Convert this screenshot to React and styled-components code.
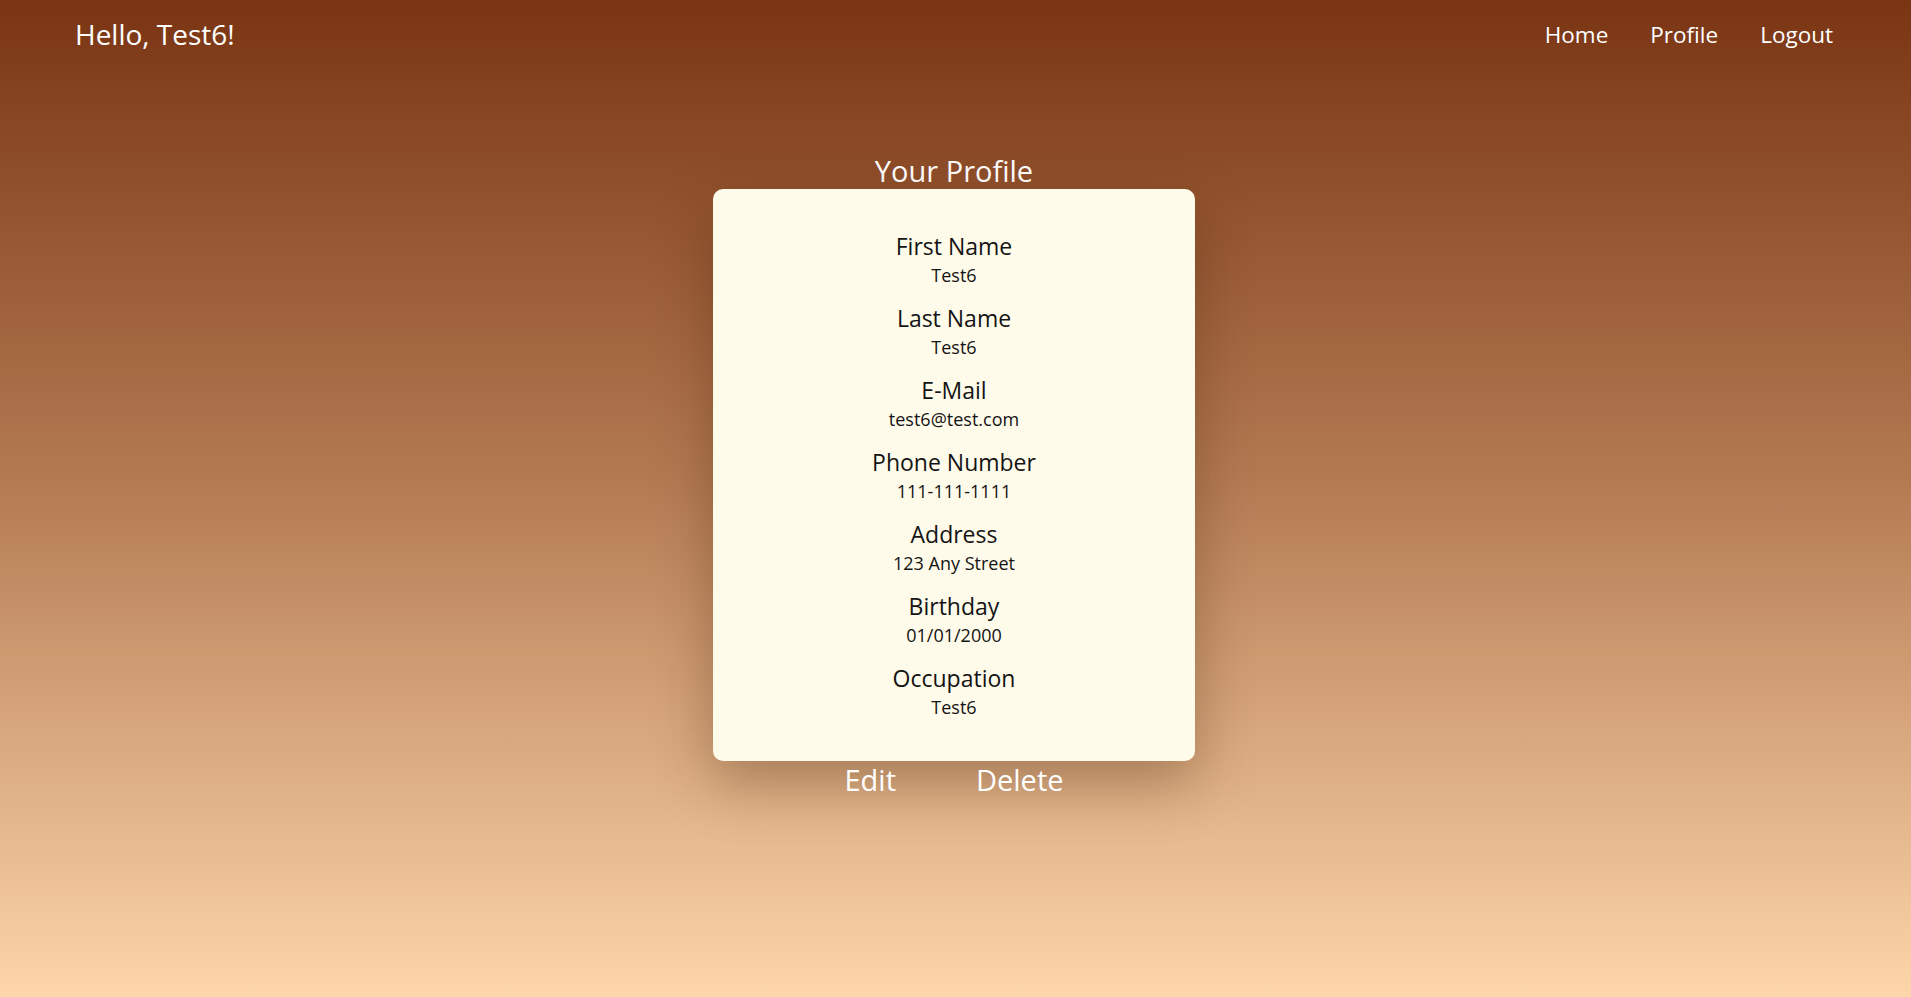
import React from "react";
import styled, { createGlobalStyle } from "styled-components";

const GlobalStyle = createGlobalStyle`
  html, body {
    margin: 0;
    padding: 0;
  }
  body {
    min-height: 100vh;
    font-family: "Open Sans", "Noto Sans", sans-serif;
    background: linear-gradient(to bottom, #7a3513 0%, #b37a52 48%, #fdd6aa 100%);
    background-attachment: fixed;
  }
`;

const PROFILE_FIELDS = [
  { label: "First Name", value: "Test6" },
  { label: "Last Name", value: "Test6" },
  { label: "E-Mail", value: "test6@test.com" },
  { label: "Phone Number", value: "111-111-1111" },
  { label: "Address", value: "123 Any Street" },
  { label: "Birthday", value: "01/01/2000" },
  { label: "Occupation", value: "Test6" },
];

const StyledPage = styled.div`
  min-height: 100vh;
  display: flex;
  flex-direction: column;
`;
const StyledHeader = styled.header`
  display: flex;
  justify-content: space-between;
  align-items: center;
  padding: 15px 78px 0 75px;
`;
const StyledGreeting = styled.div`
  font-size: 28px;
  color: #ffffff;
`;
const StyledNav = styled.nav`
  display: flex;
  gap: 42px;
`;
const StyledNavLink = styled.a`
  font-size: 22.5px;
  color: #ffffff;
  text-decoration: none;
  cursor: pointer;
`;
const StyledMain = styled.main`
  display: flex;
  flex-direction: column;
  align-items: center;
  margin-top: 100px;
  padding-right: 3px;
`;
const StyledTitle = styled.h2`
  margin: 0;
  font-size: 29px;
  line-height: 36px;
  font-weight: 400;
  color: #ffffff;
`;
const StyledCard = styled.div`
  width: 482px;
  box-sizing: border-box;
  padding: 41px 0 42px;
  background: #fffbea;
  border-radius: 10px;
  box-shadow: 0 22px 55px rgba(70, 35, 10, 0.35);
  display: flex;
  flex-direction: column;
  align-items: center;
  gap: 15px;
`;
const StyledField = styled.div`
  display: flex;
  flex-direction: column;
  align-items: center;
  color: #141414;
`;
const StyledLabel = styled.div`
  font-size: 23px;
`;
const StyledValue = styled.div`
  font-size: 18px;
  margin-top: 1px;
`;
const StyledActions = styled.div`
  display: flex;
  gap: 80px;
  margin-top: 3px;
`;
const StyledActionButton = styled.button`
  background: none;
  border: none;
  padding: 0;
  font-family: inherit;
  font-size: 29px;
  line-height: 1.1;
  color: #ffffff;
  cursor: pointer;
`;

const App = () => {
  return (
    <StyledPage>
      <GlobalStyle />
      <StyledHeader>
        <StyledGreeting>Hello, Test6!</StyledGreeting>
        <StyledNav>
          <StyledNavLink>Home</StyledNavLink>
          <StyledNavLink>Profile</StyledNavLink>
          <StyledNavLink>Logout</StyledNavLink>
        </StyledNav>
      </StyledHeader>
      <StyledMain>
        <StyledTitle>Your Profile</StyledTitle>
        <StyledCard>
          {PROFILE_FIELDS.map((field) => (
            <StyledField key={field.label}>
              <StyledLabel>{field.label}</StyledLabel>
              <StyledValue>{field.value}</StyledValue>
            </StyledField>
          ))}
        </StyledCard>
        <StyledActions>
          <StyledActionButton>Edit</StyledActionButton>
          <StyledActionButton>Delete</StyledActionButton>
        </StyledActions>
      </StyledMain>
    </StyledPage>
  );
};

export default App;
